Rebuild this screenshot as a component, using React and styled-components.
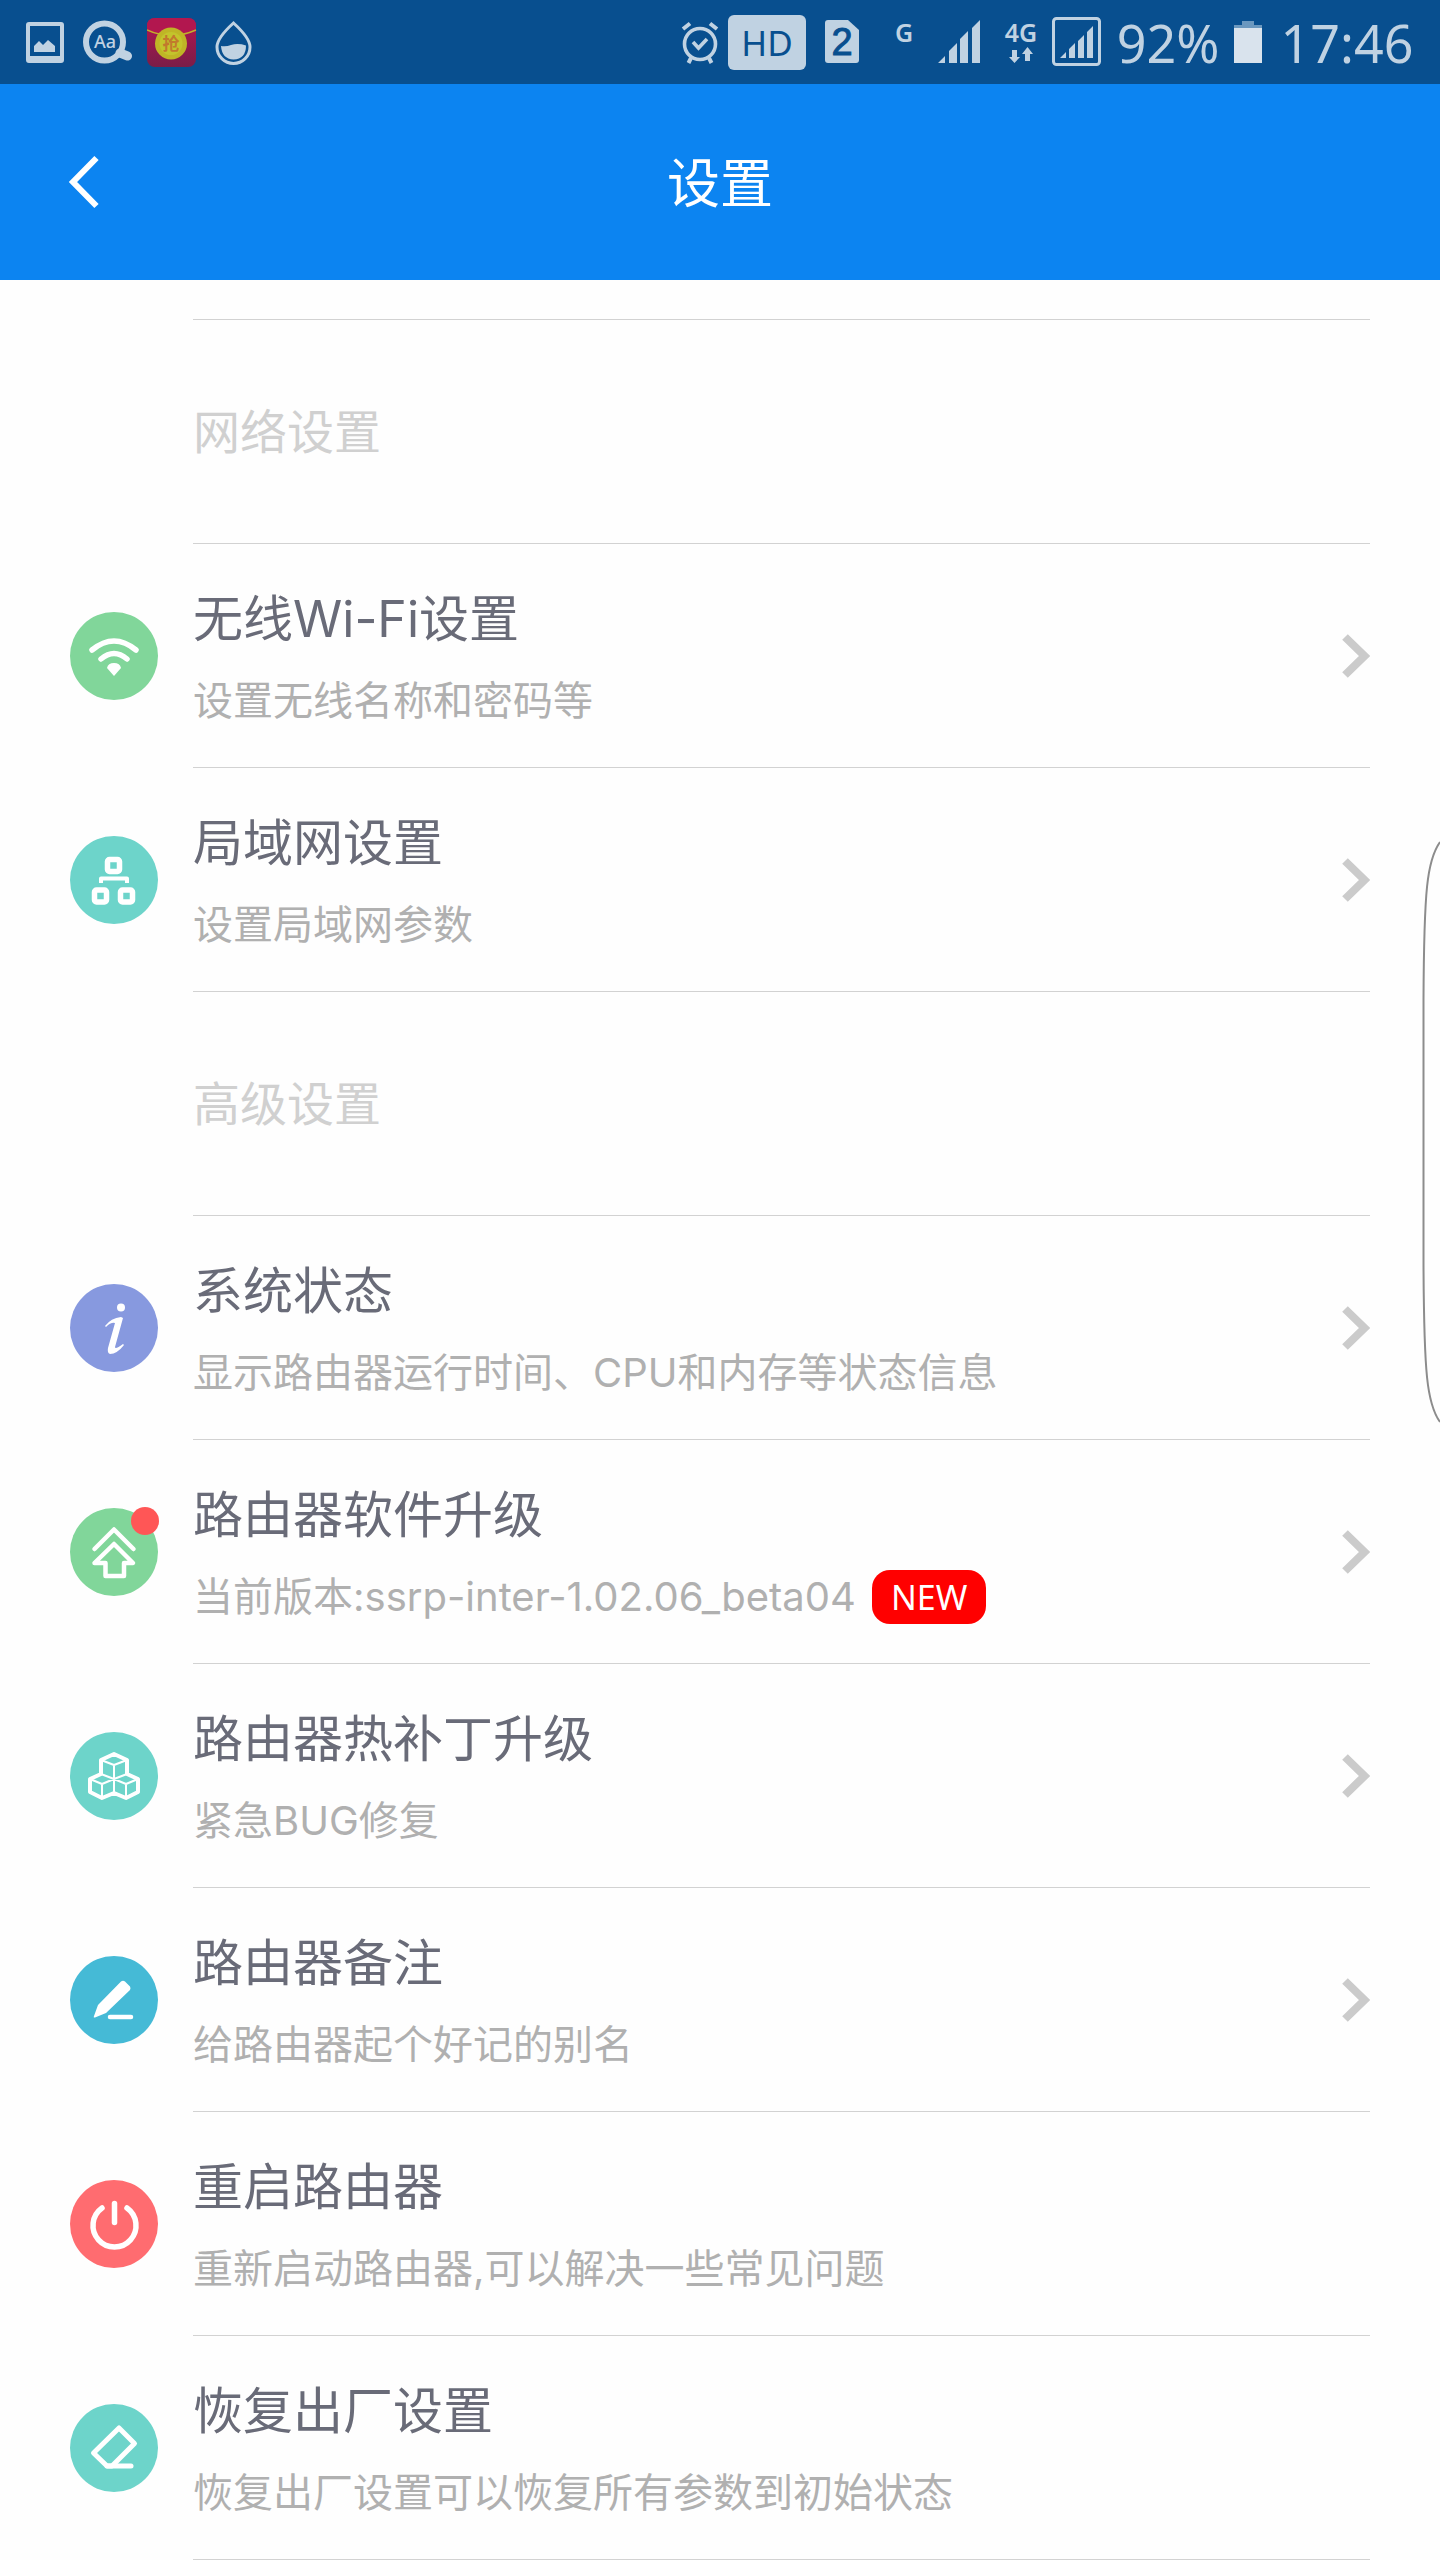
import React from "react";
import styled, { createGlobalStyle } from "styled-components";

const GlobalStyle = createGlobalStyle`
  * { box-sizing: border-box; }
  body {
    margin: 0;
    background: #fefefe;
    font-family: "Noto Sans", "Noto Sans CJK SC", sans-serif;
    overflow-x: hidden;
  }
  h1, h2, h3, p, ul { margin: 0; padding: 0; font-weight: 400; }
  svg { display: block; }
`;

const INK = "#c0d2e2";
const BAR = "#084f8f";

const Screen = styled.div`
  position: relative;
  width: 100%;
`;

const StatusBar = styled.div`
  display: flex;
  justify-content: space-between;
  align-items: center;
  height: 84px;
  padding: 0 16px 0 19px;
  background: ${BAR};
  color: ${INK};
`;

const StatusGroup = styled.div`
  display: flex;
  align-items: center;
  gap: ${(p) => p.$gap}px;
`;

const StatusItem = styled.div`
  display: flex;
  flex-direction: column;
  align-items: center;
  justify-content: center;
  width: ${(p) => p.$width}px;
  height: 50px;
`;

const StatusText = styled(StatusItem)`
  padding-top: 2px;
  font-size: 52px;
  line-height: 60px;
  white-space: nowrap;
`;

const NetworkItem = styled(StatusItem)`
  justify-content: flex-start;
  gap: 2px;
  padding-top: 2px;
  font-size: 25px;
  line-height: 26px;
  font-weight: 600;
`;

const HdBadge = styled.div`
  width: 78px;
  border-radius: 6px;
  background: ${INK};
  color: ${BAR};
  font-size: 35px;
  line-height: 55px;
  text-align: center;
`;

const Header = styled.header`
  display: grid;
  grid-template-columns: 168px 1fr 168px;
  align-items: center;
  height: 196px;
  background: #0c84f1;
  color: #fff;
`;

const BackButton = styled.button`
  display: flex;
  align-items: center;
  height: 196px;
  padding: 0 0 0 68px;
  border: 0;
  background: none;
  color: inherit;
  cursor: pointer;
`;

const Title = styled.h1`
  padding-top: 2px;
  font-size: 53px;
  line-height: 64px;
  text-align: center;
`;

const Content = styled.main`
  padding: 0 70px;
`;

const Lead = styled.div`
  height: 40px;
  margin-left: 123px;
  border-bottom: 1px solid #d2d2d2;
`;

const SectionTitle = styled.h2`
  margin-left: 123px;
  padding: 81px 0 82px;
  border-bottom: 1px solid #d2d2d2;
  color: #d0d0d0;
  font-size: 47px;
  line-height: 60px;
`;

const List = styled.ul`
  list-style: none;
`;

const Row = styled.button`
  display: grid;
  grid-template-columns: 88px 1fr;
  column-gap: 35px;
  align-items: center;
  width: 100%;
  padding: 0;
  border: 0;
  background: none;
  font-family: Inter, "Noto Sans CJK SC", sans-serif;
  text-align: left;
  cursor: pointer;
`;

const IconSlot = styled.span`
  position: relative;
  display: block;
`;

const AlertDot = styled.span`
  position: absolute;
  top: -1px;
  right: -1px;
  width: 28px;
  height: 28px;
  border-radius: 50%;
  background: #ff5656;
`;

const RowBody = styled.span`
  display: flex;
  align-items: center;
  justify-content: space-between;
  border-bottom: 1px solid #d2d2d2;
`;

const RowText = styled.span`
  display: flex;
  flex-direction: column;
  gap: 26px;
  padding: 45px 0 40px;
`;

const RowTitle = styled.span`
  color: #696b78;
  font-size: 50px;
  line-height: 60px;
`;

const RowNote = styled.span`
  display: flex;
  align-items: center;
  gap: 16px;
  height: 52px;
  color: #b0b0b0;
  font-size: 40px;
  line-height: 52px;
`;

const NewBadge = styled.span`
  padding: 0 19px;
  border-radius: 18px;
  background: #ff0000;
  color: #fff;
  font-family: "Noto Sans", sans-serif;
  font-size: 34px;
  line-height: 54px;
`;

const EdgeHandle = styled.svg`
  position: absolute;
  top: 840px;
  right: 0;
`;

const ImageIcon = () => (
  <svg width="50" height="50" viewBox="0 0 50 50" fill={INK} aria-hidden="true">
    <path fillRule="evenodd" d="M10 5H42Q45 5 45 8V43Q45 46 42 46H10Q7 46 7 43V8Q7 5 10 5ZM11 9V39H41V9Z" />
    <path d="M15 35V29L20 24L24 28L29 23L36 29V35Z" />
  </svg>
);

const LookupIcon = () => (
  <svg width="50" height="50" viewBox="0 0 50 50" aria-hidden="true">
    <circle cx="21.500" cy="25" r="18.500" fill="none" stroke={INK} strokeWidth="6" />
    <path d="M37 36L44.500 39" stroke={INK} strokeWidth="9" strokeLinecap="round" />
    <text x="22" y="31" textAnchor="middle" fontSize="18" fontWeight="500" fill={INK}>Aa</text>
  </svg>
);

const PacketIcon = () => (
  <svg width="50" height="50" viewBox="0 0 50 50" aria-hidden="true">
    <defs>
      <linearGradient id="packet" x1="0" y1="0" x2="0" y2="1">
        <stop offset="0.300" stopColor="#a3174e" />
        <stop offset="1" stopColor="#7a1d48" />
      </linearGradient>
    </defs>
    <rect width="49" height="49" y="1" rx="8" fill="url(#packet)" />
    <path d="M0 13V9Q0 1 8 1H41Q49 1 49 9V13Q24 24 0 13Z" fill="#b2174f" />
    <path d="M0 13Q24 24 49 13" fill="none" stroke="#c2b02c" strokeWidth="1.500" />
    <circle cx="24" cy="26.500" r="16" fill="#bfb526" />
    <circle cx="24" cy="26.500" r="11.500" fill="#c3c42c" />
    <text x="24" y="33" textAnchor="middle" fontSize="17" fontWeight="700" fill="#c27a2c">抢</text>
  </svg>
);

const DropIcon = () => (
  <svg width="50" height="50" viewBox="0 0 50 50" aria-hidden="true">
    <path d="M22.500 6C28 11 39 22 39 30A16.500 16.500 0 0 1 6 30C6 22 17 11 22.500 6Z" fill="none" stroke={INK} strokeWidth="3" />
    <path d="M10 29Q15 30 20 28Q27 26 35 28.500Q35 42 22.500 42.500Q11 42 10 29Z" fill={INK} />
  </svg>
);

const AlarmIcon = () => (
  <svg width="40" height="50" viewBox="0 0 40 50" fill="none" stroke={INK} aria-hidden="true">
    <circle cx="20" cy="27" r="15.500" strokeWidth="3.600" />
    <path d="M13 25L18.500 31L27 22" strokeWidth="3.600" />
    <path d="M3 12L10 6.500M37 12L30 6.500" strokeWidth="4" />
    <path d="M11 41L8.500 46M29 41L31.500 46" strokeWidth="4" />
  </svg>
);

const SimIcon = () => (
  <svg width="34" height="50" viewBox="0 0 34 50" aria-hidden="true">
    <path d="M3 3H23L34 13V43Q34 46 31 46H3Q0 46 0 43V6Q0 3 3 3Z" fill={INK} />
    <text x="17" y="38" textAnchor="middle" fontFamily="Liberation Sans, sans-serif" fontSize="38" fill={BAR} stroke={BAR} strokeWidth="1">2</text>
  </svg>
);

const SignalIcon = () => (
  <svg width="52" height="50" viewBox="0 0 52 50" fill={INK} aria-hidden="true">
    <path d="M0 46L7 39V46ZM11 46V34L19 26V46ZM22 46V22L30 14V46ZM34 46V11L42 3V46Z" />
  </svg>
);

const DataArrows = () => (
  <svg width="28" height="17" viewBox="0 0 28 17" fill={INK} aria-hidden="true">
    <path d="M5 3H10V10H13L7.500 16L2 10H5ZM18 14V7H15L20.500 0L26 7H23V14Z" />
  </svg>
);

const BoxedSignalIcon = () => (
  <svg width="50" height="50" viewBox="0 0 50 50" fill={INK} aria-hidden="true">
    <rect x="1.500" y="1.500" width="46" height="46" rx="3" fill="none" stroke={INK} strokeWidth="3" />
    <path d="M8 41L14 35V41ZM17 41V32L23 26V41ZM26 41V24L32 18V41ZM35 41V15L41 9V41Z" />
  </svg>
);

const BatteryIcon = () => (
  <svg width="28" height="50" viewBox="0 0 28 50" aria-hidden="true">
    <path d="M8 4H20V8H28V12H0V8H8Z" fill="#6b98bf" />
    <rect y="11" width="28" height="35" fill="#d9e3ed" />
  </svg>
);

const BackIcon = () => (
  <svg width="32" height="54" viewBox="0 0 32 54" fill="none" stroke="#fff" strokeWidth="6" aria-hidden="true">
    <path d="M28.500 3L5 27L28.500 51" />
  </svg>
);

const Chevron = () => (
  <svg width="28" height="46" viewBox="0 0 28 46" fill="none" stroke="#cbcbcb" strokeWidth="8" aria-hidden="true">
    <path d="M3 4L22.500 23L3 42" />
  </svg>
);

const glyphs = {
  wifi: (
    <g fill="none" stroke="#fff" strokeWidth="5.500" strokeLinecap="round">
      <path d="M22 38Q44 20 66 38" />
      <path d="M31 47Q44 36 57 47" />
      <path d="M44 64L37 56Q38 51 44 51Q50 51 51 56Z" fill="#fff" stroke="none" />
    </g>
  ),
  lan: (
    <g fill="none" stroke="#fff" strokeWidth="5.500" strokeLinejoin="round">
      <rect x="37.500" y="23.500" width="12" height="12" rx="2" />
      <rect x="24.500" y="54" width="12" height="12" rx="2" />
      <rect x="50.500" y="54" width="12" height="12" rx="2" />
      <path d="M31 47V42.500H57V47" strokeWidth="4" />
    </g>
  ),
  info: (
    <g fill="#fff">
      <circle cx="51" cy="23.500" r="4" />
      <path d="M35 42Q41 34 51 33L53 34L45 63Q45 66 53 60L54 61Q47 70 40 70Q37 69 38 64L45 39Q41 38 36 43Z" />
    </g>
  ),
  upgrade: (
    <g fill="none" stroke="#fff" strokeWidth="4.500" strokeLinecap="round" strokeLinejoin="round">
      <path d="M24.500 41L44 21.500L63.500 41" />
      <path d="M44 36L63 55H54V68H35.500V55H24.500Z" />
    </g>
  ),
  patch: (
    <g fill="none" stroke="#fff" strokeLinejoin="round">
      <path d="M44 22L57 28V42L68 47V60L56 66L44 61L32 66L20 60V47L31 42V28Z" strokeWidth="4" />
      <path d="M31 28L44 33L57 28M44 33V61M31 42L44 47L57 42M20 47L32 52L44 47L56 52L68 47M32 52V66M56 52V66" strokeWidth="2" />
    </g>
  ),
  rename: (
    <g fill="#fff">
      <path d="M51 25.500Q53 24 55 25.500L60 30.500Q61 32 60 34L36 57L25 61.500Q23 62 24 60L28 49Z" />
      <path d="M40 61H61" stroke="#fff" strokeWidth="4.500" strokeLinecap="round" />
    </g>
  ),
  power: (
    <g fill="none" stroke="#fff" strokeWidth="5.500" strokeLinecap="round">
      <path d="M32 28A21.500 21.500 0 1 0 57 28" />
      <path d="M44.500 23.500V42.500" />
    </g>
  ),
  erase: (
    <g fill="none" stroke="#fff" strokeWidth="5" strokeLinecap="round" strokeLinejoin="round">
      <path d="M49 24L64.500 39.500L42 62H37L23.500 49Z" />
      <path d="M37 62H61" />
    </g>
  ),
};

const RowIcon = ({ name, color }) => (
  <svg width="88" height="88" viewBox="0 0 88 88" aria-hidden="true">
    <circle cx="44" cy="44" r="44" fill={color} />
    {glyphs[name]}
  </svg>
);

const sections = [
  {
    title: "网络设置",
    rows: [
      { icon: "wifi", color: "#81d69a", title: "无线Wi-Fi设置", note: "设置无线名称和密码等", link: true },
      { icon: "lan", color: "#6dd4ca", title: "局域网设置", note: "设置局域网参数", link: true },
    ],
  },
  {
    title: "高级设置",
    rows: [
      { icon: "info", color: "#8799df", title: "系统状态", note: "显示路由器运行时间、CPU和内存等状态信息", link: true },
      { icon: "upgrade", color: "#81d69a", title: "路由器软件升级", note: "当前版本:ssrp-inter-1.02.06_beta04", link: true, isNew: true },
      { icon: "patch", color: "#6dd4ca", title: "路由器热补丁升级", note: "紧急BUG修复", link: true },
      { icon: "rename", color: "#45bad6", title: "路由器备注", note: "给路由器起个好记的别名", link: true },
      { icon: "power", color: "#ff6c70", title: "重启路由器", note: "重新启动路由器,可以解决一些常见问题" },
      { icon: "erase", color: "#6dd4ca", title: "恢复出厂设置", note: "恢复出厂设置可以恢复所有参数到初始状态" },
    ],
  },
];

function SettingRow({ item }) {
  return (
    <li>
      <Row type="button">
        <IconSlot>
          <RowIcon name={item.icon} color={item.color} />
          {item.isNew && <AlertDot />}
        </IconSlot>
        <RowBody>
          <RowText>
            <RowTitle>{item.title}</RowTitle>
            <RowNote>
              <span>{item.note}</span>
              {item.isNew && <NewBadge>NEW</NewBadge>}
            </RowNote>
          </RowText>
          {item.link && <Chevron />}
        </RowBody>
      </Row>
    </li>
  );
}

export default function App() {
  return (
    <Screen>
      <GlobalStyle />
      <StatusBar>
        <StatusGroup $gap={14}>
          <ImageIcon />
          <LookupIcon />
          <PacketIcon />
          <DropIcon />
        </StatusGroup>
        <StatusGroup $gap={8}>
          <AlarmIcon />
          <HdBadge>HD</HdBadge>
          <StatusItem $width={56}><SimIcon /></StatusItem>
          <NetworkItem $width={52}>G</NetworkItem>
          <SignalIcon />
          <NetworkItem $width={46}>
            4G
            <DataArrows />
          </NetworkItem>
          <BoxedSignalIcon />
          <StatusText $width={116}>92%</StatusText>
          <BatteryIcon />
          <StatusText $width={154}>17:46</StatusText>
        </StatusGroup>
      </StatusBar>
      <Header>
        <BackButton type="button" aria-label="返回"><BackIcon /></BackButton>
        <Title>设置</Title>
      </Header>
      <Content>
        <Lead />
        {sections.map((section) => (
          <section key={section.title}>
            <SectionTitle>{section.title}</SectionTitle>
            <List>
              {section.rows.map((item) => (
                <SettingRow key={item.title} item={item} />
              ))}
            </List>
          </section>
        ))}
      </Content>
      <EdgeHandle width="18" height="584" viewBox="0 0 18 584" fill="none" stroke="#8c8c8c" strokeWidth="2" aria-hidden="true">
        <path d="M18 2C5 20 2 50 1.500 160V424C2 534 5 564 18 582" />
      </EdgeHandle>
    </Screen>
  );
}
